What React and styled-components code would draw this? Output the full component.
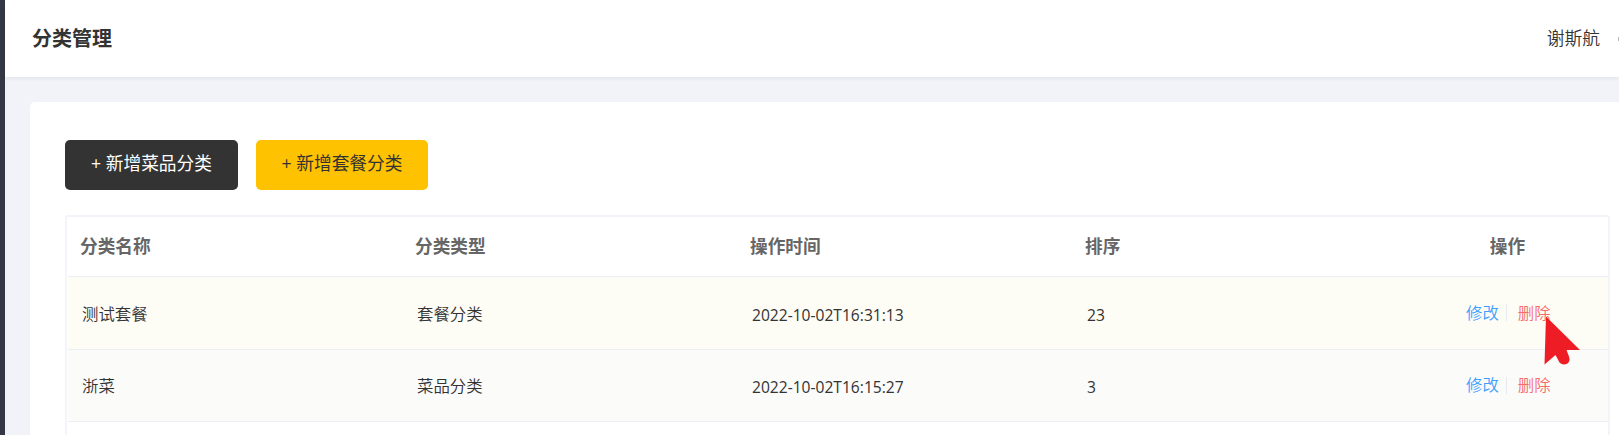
import React from "react";
import styled, { createGlobalStyle } from "styled-components";

const GlobalStyle = createGlobalStyle`
  * { box-sizing: border-box; }
  html, body { margin: 0; overflow: hidden; }
  body {
    font-family: "Open Sans", "Noto Sans CJK SC", sans-serif;
    color: #333333;
    background: #f2f3f8;
  }
`;

const Page = styled.div`
  display: flex;
  width: 100vw;
  height: 100vh;
  overflow: hidden;
  position: relative;
`;

const Sidebar = styled.aside`
  flex: 0 0 5px;
  background: #343744;
`;

const Main = styled.main`
  flex: 1;
  min-width: 0;
  display: flex;
  flex-direction: column;
`;

const Header = styled.header`
  flex: 0 0 77px;
  display: flex;
  align-items: center;
  justify-content: space-between;
  padding-left: 27px;
  background: #ffffff;
  box-shadow: 0 1px 5px rgba(0, 0, 0, 0.08);
`;

const Title = styled.h1`
  margin: 0;
  font-size: 20px;
  line-height: 28px;
  font-weight: 700;
`;

const User = styled.div`
  display: flex;
  align-items: center;
  padding-bottom: 2px;
  font-size: 17.8px;
  line-height: 26px;
  font-weight: 350;
`;

const LogoutIcon = styled.svg`
  width: 1px;
  height: 18px;
  margin: 2px 0 0 18px;
`;

const Card = styled.section`
  flex: 1;
  margin: 25px 0 0 25px;
  padding: 38px 9px 0 35px;
  background: #ffffff;
  border-radius: 5px 0 0 0;
`;

const Toolbar = styled.div`
  display: flex;
  gap: 18px;
  margin-bottom: 25px;
`;

const Button = styled.button`
  width: ${(p) => (p.$primary ? 172 : 173)}px;
  height: 50px;
  padding: 0 0 5px;
  border: 0;
  border-radius: 5px;
  font: 400 17.7px/24px "Open Sans", "Noto Sans CJK SC", sans-serif;
  color: ${(p) => (p.$primary ? "#333333" : "#ffffff")};
  background: ${(p) => (p.$primary ? "#ffc200" : "#333333")};
`;

const Table = styled.div`
  height: 300px;
  padding-left: 1px;
  border: 2px solid #f3f4f9;
  border-radius: 3px;
`;

const Row = styled.div`
  display: grid;
  grid-template-columns: 334px repeat(3, 335px) 1fr;
  align-items: center;
  height: ${(p) => p.$height}px;
  background: ${(p) => p.$tone || "#ffffff"};
  border-bottom: 1px solid #ebeef5;
`;

const HeadCell = styled.div`
  padding: 0 0 1px ${(p) => (p.$center ? 0 : 13)}px;
  text-align: ${(p) => (p.$center ? "center" : "left")};
  font-size: 17.65px;
  line-height: 26px;
  font-weight: 700;
  color: #666666;

  &:first-child {
    padding-left: 12px;
  }
`;

const Cell = styled.div`
  padding: ${(p) => (p.$latin ? 3 : 1)}px 0 0 15px;
  font-size: ${(p) => (p.$latin ? 15.6 : 16.4)}px;
  line-height: 24px;
  font-weight: ${(p) => (p.$latin ? 400 : 350)};

  &:first-child {
    padding-left: 14px;
  }
`;

const Actions = styled.div`
  display: flex;
  align-items: center;
  padding: 0 0 1px 59px;
`;

const Action = styled.a`
  font-size: 16.4px;
  line-height: 24px;
  font-weight: 350;
  color: ${(p) => (p.$danger ? "#f56c6c" : "#409eff")};
`;

const Divider = styled.span`
  width: 1px;
  height: 17px;
  margin: 0 11px 0 7px;
  background: #e6e9f2;
`;

const Pointer = styled.svg`
  position: absolute;
  left: 1543px;
  top: 315px;
  width: 40px;
  height: 52px;
`;

const rows = [
  { name: "测试套餐", type: "套餐分类", time: "2022-10-02T16:31:13", sort: 23, tone: "#fdfcf5", height: 73 },
  { name: "浙菜", type: "菜品分类", time: "2022-10-02T16:15:27", sort: 3, tone: "#fbfbfa", height: 72 },
];

export default function App() {
  return (
    <Page>
      <GlobalStyle />
      <Sidebar />
      <Main>
        <Header>
          <Title>分类管理</Title>
          <User>
            谢斯航
            <LogoutIcon viewBox="0 0 1 18">
              <path d="M1 7v4" stroke="#bbbbbb" strokeWidth="2" />
            </LogoutIcon>
          </User>
        </Header>
        <Card>
          <Toolbar>
            <Button>+ 新增菜品分类</Button>
            <Button $primary>+ 新增套餐分类</Button>
          </Toolbar>
          <Table>
            <Row $height={60}>
              <HeadCell>分类名称</HeadCell>
              <HeadCell>分类类型</HeadCell>
              <HeadCell>操作时间</HeadCell>
              <HeadCell>排序</HeadCell>
              <HeadCell $center>操作</HeadCell>
            </Row>
            {rows.map((r) => (
              <Row key={r.name} $height={r.height} $tone={r.tone}>
                <Cell>{r.name}</Cell>
                <Cell>{r.type}</Cell>
                <Cell $latin>{r.time}</Cell>
                <Cell $latin>{r.sort}</Cell>
                <Actions>
                  <Action>修改</Action>
                  <Divider />
                  <Action $danger>删除</Action>
                </Actions>
              </Row>
            ))}
          </Table>
        </Card>
      </Main>
      <Pointer viewBox="0 0 40 52">
        <path
          d="M3 1.5 37 35H23.5L26 41.5Q27.5 46 24.5 48.5Q20 51 16.5 47.5L12.5 40 1.5 49.5Z"
          fill="#ee1c25"
        />
      </Pointer>
    </Page>
  );
}
